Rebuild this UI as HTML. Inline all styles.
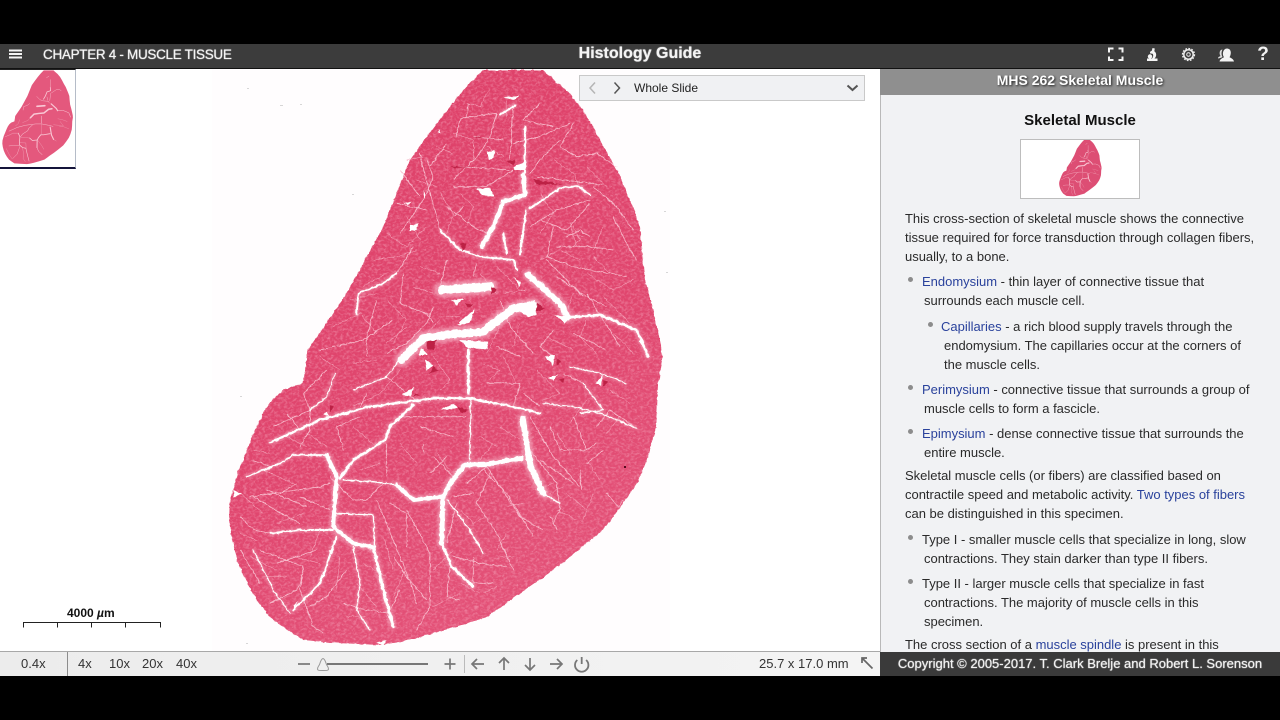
<!DOCTYPE html>
<html><head><meta charset="utf-8"><title>Histology Guide</title>
<style>
html,body{margin:0;padding:0;background:#000;width:1280px;height:720px;overflow:hidden;font-family:"Liberation Sans",sans-serif}
#s{position:absolute;left:0;top:0;width:1280px;height:720px;background:#000;overflow:hidden}
.a{position:absolute;white-space:nowrap}
#top{left:0;top:44px;width:1280px;height:24px;background:#3c3c3c}
#topl{left:0;top:68px;width:1280px;height:1px;background:#111}
#main{left:0;top:69px;width:880px;height:583px;background:#fff;overflow:hidden}
#panel{left:880px;top:69px;width:400px;height:583px;background:#f1f2f4;overflow:hidden;border-left:1px solid #b9b9b9;box-sizing:border-box}
#phead{left:880px;top:69px;width:400px;height:26px;background:#8f8f8f;color:#fff;font-weight:bold;font-size:14px;line-height:23px;text-align:center;text-shadow:1px 1px 2px #222}
.t{position:absolute;white-space:nowrap;font-size:13px;line-height:19px;color:#2a2a2a;height:19px;letter-spacing:-.01px}
.t a{color:#2a429c;text-decoration:none}
.b{position:absolute;width:5px;height:5px;border-radius:3px;background:#8c8c8c}
#foot{left:0;top:651px;width:880px;height:25px;background:linear-gradient(90deg,#ececec 0,#f0f0f0 50%,#f4f4f4 100%);border-top:1px solid #a8a8a8;box-sizing:border-box}
.f{position:absolute;top:656px;font-size:13px;line-height:16px;color:#333;white-space:nowrap}
#copy{left:880px;top:652px;width:400px;height:24px;background:#3a3a3a;color:#f2f2f2;font-size:13px;line-height:23px;text-align:center;text-shadow:0 0 1px #fff}
#dd{left:579px;top:75px;width:286px;height:26px;box-sizing:border-box;background:#f0f1f3;border:1px solid #c9c9c9}
</style></head><body>
<div id="s">
<svg width="0" height="0" style="position:absolute">
<defs>
<filter id="rough" x="-5%" y="-5%" width="110%" height="110%" color-interpolation-filters="sRGB"><feTurbulence type="fractalNoise" baseFrequency="0.22" numOctaves="2" seed="4"/><feDisplacementMap in="SourceGraphic" scale="3" xChannelSelector="R" yChannelSelector="G"/></filter>
<filter id="tex" x="0" y="0" width="100%" height="100%" color-interpolation-filters="sRGB"><feTurbulence type="fractalNoise" baseFrequency="0.32 0.45" numOctaves="2" seed="9"/><feColorMatrix values="0 0 0 0 1  0 0 0 0 .8  0 0 0 0 .86  .9 0 0 0 -.38"/></filter>
<filter id="bl" x="-5%" y="-5%" width="110%" height="110%"><feGaussianBlur stdDeviation="1.500"/></filter>
<linearGradient id="fl" x1="0.3" y1="0" x2="0.7" y2="1"><stop offset="0" stop-color="#de4169"/><stop offset=".55" stop-color="#e0466e"/><stop offset="1" stop-color="#e4547a"/></linearGradient>
<path id="outline" d="M483 70L543 70L552 78L568 92L583 110L596 132L607 153L618 172L627 193L634 210L640 227L642 252L645 280L652 305L657 327L661 345L662 360L658 383L657 410L655 433L647 460L637 483L620 508L603 530L588 542L570 557L545 576L520 593L505 604L487 617L455 627L420 637L400 642L380 645L337 643L303 640L285 628L270 617L257 600L247 583L238 562L232 540L229 520L230 500L238 472L247 450L255 430L263 413L272 400L283 390L303 383L306 365L308 350L317 337L332 315L347 293L365 260L383 227L396 195L410 160L428 135L447 110L465 88Z"/>
<clipPath id="cp"><use href="#outline"/></clipPath>
<g id="major" fill="none" stroke-linecap="round" stroke-linejoin="round">
 <g transform="translate(220 60) scale(.3333)">
 <path style="stroke-width:calc(24*var(--k,1))" d="M545 900L610 835L700 822L790 815L880 745L940 735"/>
 <path style="stroke-width:calc(18*var(--k,1))" d="M925 645L1020 730L1045 772"/>
 <path style="stroke-width:calc(8*var(--k,1))" d="M1045 772L1140 765L1250 810L1285 890"/>
 <path style="stroke-width:calc(26*var(--k,1))" d="M665 690L810 680"/>
 <path style="stroke-width:calc(13*var(--k,1))" d="M910 345L915 405L850 425L820 500L785 560"/>
 <path style="stroke-width:calc(6*var(--k,1))" d="M915 200L915 340M930 445L1020 385L1075 378L1110 405M660 510L720 570L780 590L880 600L890 630M850 520L860 580M918 450L900 585M530 640L490 670L415 700L410 760M840 165L885 135"/>
 </g>
 <g transform="translate(220 350) scale(.3333)">
 <path style="stroke-width:calc(7*var(--k,1))" d="M150 278L300 210L450 170L640 145L750 145L880 170L960 190"/>
 <path style="stroke-width:calc(8*var(--k,1))" d="M745 0L745 130"/>
 <path style="stroke-width:calc(4*var(--k,1))" d="M752 150L750 330"/>
 <path style="stroke-width:calc(18*var(--k,1))" d="M908 205L922 290L932 350L970 430"/>
 <path style="stroke-width:calc(4*var(--k,1))" d="M970 430L1020 460"/>
 <path style="stroke-width:calc(14*var(--k,1))" d="M905 325L800 342L735 345L690 400L668 445"/>
 <path style="stroke-width:calc(12*var(--k,1))" d="M665 440L580 450L530 405"/>
 <path style="stroke-width:calc(4*var(--k,1))" d="M530 405L460 395L370 390"/>
 <path style="stroke-width:calc(15*var(--k,1))" d="M668 455L665 580"/>
 <path style="stroke-width:calc(8*var(--k,1))" d="M665 580L695 650L760 710"/>
 <path style="stroke-width:calc(4*var(--k,1))" d="M682 450L750 540L790 610"/>
 <path style="stroke-width:calc(8*var(--k,1))" d="M580 165L510 230L495 270L400 330L360 385"/>
 <path style="stroke-width:calc(5*var(--k,1))" d="M80 380L180 340L220 315L320 315"/>
 <path style="stroke-width:calc(12*var(--k,1))" d="M320 315L350 380L340 520"/>
 <path style="stroke-width:calc(12*var(--k,1))" d="M340 530L400 580L460 592"/>
 <path style="stroke-width:calc(9*var(--k,1))" d="M460 592L490 720L520 830"/>
 <path style="stroke-width:calc(6*var(--k,1))" d="M150 550L240 540L340 540"/>
 <path style="stroke-width:calc(4*var(--k,1))" d="M350 490L460 495L465 590"/>
 <path style="stroke-width:calc(6*var(--k,1))" d="M350 560L300 700L220 780"/>
 <path style="stroke-width:calc(4*var(--k,1))" d="M400 590L420 700L410 780L450 840"/>
 <path style="stroke-width:calc(3.500*var(--k,1))" d="M100 600L160 720L210 790M970 160L1060 170L1140 190L1250 235M1090 100L1150 180L1080 190M1050 50L1140 70L1220 100M560 0L500 80L400 120M345 70L320 140L270 180"/>
 </g>
</g>
<g id="minor" fill="none" stroke="#f8bccd" stroke-width="2.500" stroke-linejoin="round">
 <g transform="translate(220 60) scale(.3333)">
 <path d="M710 230L720 175L830 160M745 130L740 170M830 160L810 230L780 280L700 360M880 140L870 300M620 300L640 350L610 420L540 520M600 280L610 330L640 430L660 510M680 250L630 320M540 330L600 410M530 430L620 450M960 130L910 180L1000 200M1060 190L1020 260L1070 290L1130 280L1190 320M1020 240L960 300L930 340M1120 380L1190 440L1240 510M1180 470L1220 550L1250 600M960 480L1040 510L1110 430M1000 500L980 590L1060 620L1220 650M1010 650L1100 710L1160 740M980 600L1090 710M880 330L800 380L700 380M680 440L760 500L800 520M680 600L660 680M770 610L760 650M550 640L540 730L560 740L620 760L640 790M580 560L530 640M470 720L440 830L440 890M300 870L430 840L520 780M1000 810L960 860L1000 890M1060 820L1160 870M840 720L870 800L940 880M700 470L730 440M930 500L1010 450L1110 420M1010 560L1110 560L1180 570M760 230L850 240M720 320L870 330M950 350L1150 375M640 740L620 790L560 850L500 880M830 860L900 890M1100 700L1150 780L1200 860M880 250L960 230L1050 190M1040 530L1080 510L1110 530"/>
 </g>
 <g transform="translate(220 350) scale(.3333)">
 <path d="M160 230L270 180L250 130L320 60M200 190L240 240M270 170L270 240L240 290M100 330L150 350M90 440L300 410L330 400M100 440L200 500L240 520M60 500L100 540L150 550M140 420L260 470M240 440L330 480M120 600L250 650L240 720M170 640L290 600M60 600L120 700M330 380L400 450L440 450L490 400M370 300L350 230L420 200M540 200L620 200L740 200M600 230L700 260M500 280L500 380M610 280L610 310M470 450L520 570L580 720L590 760M510 460L560 490L560 590M560 480L630 610L630 770L590 840M630 370L680 320M700 380L640 320M740 400L800 350L900 500L970 540M790 360L860 430L940 560M810 370L770 460L830 550L880 660M760 430L700 440M710 460L680 580M700 620L780 640L860 650M760 620L760 700L820 700M690 650L680 740L720 750M520 620L560 680L620 750M370 760L400 770L440 780L510 790M240 720L280 830L310 850M270 770L320 740L380 660M930 200L1000 320L1080 410M990 230L1020 300L1100 300M1060 200L1100 300L1130 280M960 330L1060 400M930 300L1010 400L1020 480L1000 520M1080 360L1085 420M1160 430L1195 470L1210 450M1250 235L1170 180L1130 230M800 100L900 100L880 170M910 130L960 170M1090 100L1030 70M990 500L1010 540M500 80L560 130L600 160M440 130L420 170M230 400L180 430M150 760L230 720L250 680M540 720L500 800M1150 300L1100 340"/>
 </g>
</g>
<g id="fine" fill="none" stroke="#f5a6bc" stroke-width="1.600">
 <g transform="translate(220 60) scale(.3333)">
 <path d="M740 130L780 140L800 100M860 120L860 170M700 220L760 240L760 300M800 260L850 290M650 260L700 280M560 300L610 290M590 360L650 380M660 400L700 460L680 520M720 400L760 440L740 500M560 470L600 540M500 520L560 560L620 500M460 600L530 590L590 570M430 680L500 640M390 720L470 700M340 800L420 760L470 820M500 720L560 780L520 850M600 620L660 640M580 680L640 700M830 620L900 690M780 640L830 700M960 400L1000 460L960 520M1000 300L1060 340L1090 400M1100 320L1160 380M960 600L1020 570L1080 600M1120 590L1170 640M1100 640L1180 690L1240 660M1150 500L1120 570M1060 500L1080 540L1060 560M1030 520L1090 530M1050 490L1070 560M850 700L920 690M1060 700L1040 760M1150 710L1230 790M1180 820L1240 880M980 830L1060 870M1100 780L1080 830L1130 880M900 790L880 860M840 800L800 880M660 770L720 770M560 800L500 850M620 820L660 780"/>
 </g>
 <g transform="translate(220 350) scale(.3333)">
 <path d="M300 20L360 60M400 40L470 30M400 170L480 130L540 60M640 20L690 90L660 120M780 40L840 60L810 90M850 20L890 100M950 60L1020 130L970 150M1100 150L1050 220M1170 120L1230 160M1200 200L1160 250M1010 250L1050 310M1100 330L1140 390M1040 430L1100 480M1120 430L1090 510M1010 480L1070 510M840 230L900 270M780 260L830 290M820 280L780 330M650 310L690 360M540 280L590 340M420 360L480 340M400 230L470 290M260 250L320 290M200 260L260 290M100 300L150 310M130 360L220 400M60 430L130 490M170 520L250 490M60 550L110 570M90 620L170 660M130 680L200 680M220 620L300 640M300 540L270 620M360 620L350 720M430 640L500 680M410 700L470 770M380 800L440 800M520 660L490 560M560 650L520 740M640 660L700 600M720 480L760 520M760 520L800 500M860 550L830 600M840 620L880 620M720 700L780 730M640 770L720 730M790 730L830 710M860 470L910 460M940 420L1000 400M990 430L1030 410"/>
 </g>
</g>
<g id="holes" fill="#fff">
 <g transform="translate(220 60) scale(.3333)">
 <path d="M800 275L825 270L822 295L805 300ZM770 385L810 385L822 410L785 405ZM570 495L595 490L590 510L570 512ZM880 320L920 305L915 330L885 330ZM880 735L945 720L950 765L925 770L900 755ZM695 720L735 715L710 735ZM710 795L765 745L750 790ZM720 840L805 845L800 868L745 865ZM880 650L905 670L900 682ZM605 865L625 885L595 885ZM850 112L900 108L880 120ZM1005 765L1055 770L1035 790ZM550 430L575 425L565 435ZM655 205L662 220L655 218ZM610 390L617 415L610 410Z"/>
 </g>
 <g transform="translate(220 350) scale(.3333)">
 <path d="M615 30L640 45L620 62ZM545 135L580 110L575 138ZM660 180L710 175L700 160ZM320 185L330 200L310 195ZM975 20L1005 15L1000 45ZM985 85L1015 70L1000 92ZM1125 100L1150 75L1142 106ZM40 420L65 430L40 445ZM220 770L235 750L222 782ZM470 880L500 870L490 885Z"/>
 </g>
</g>
<g id="dark" fill="#bd2145">
 <g transform="translate(220 60) scale(.3333)">
 <path d="M860 305L885 300L880 315ZM950 730L975 745L950 755ZM620 845L650 840L640 870L620 865ZM720 550L740 550L730 575ZM815 680L830 690L815 705ZM735 730L760 735L745 745ZM940 358L1030 372L950 374ZM760 232L790 232L775 236ZM690 320L760 320L700 324Z"/>
 </g>
 <g transform="translate(220 350) scale(.3333)">
 <path d="M640 50L655 60L630 72ZM585 130L600 135L580 140ZM710 170L745 180L725 190ZM1010 25L1025 35L1010 45ZM1015 90L1035 85L1030 100ZM1150 90L1165 95L1150 110ZM330 165L345 170L330 185Z"/>
 </g>
</g>
</defs></svg>

<div class="a" id="top"></div><div class="a" id="topl"></div>
<svg class="a" style="left:9px;top:49px" width="14" height="10"><path d="M0 1.500H13M0 5H13M0 8.500H13" stroke="#f5f5f5" stroke-width="2"/></svg>
<div class="a" style="left:43px;top:46px;font-size:13.500px;line-height:17px;color:#f4f4f4;letter-spacing:-.31px;text-shadow:0 0 1px #fff">CHAPTER 4 - MUSCLE TISSUE</div>
<div class="a" style="left:540px;width:200px;text-align:center;top:44px;font-size:16px;line-height:19px;font-weight:bold;color:#f4f4f4;text-shadow:0 0 1px #fff">Histology Guide</div>
<svg class="a" style="left:1100px;top:44px" width="180" height="24" fill="none">
 <path d="M9 8.500V4.500H13.500M18.500 4.500H22.500V8.500M22.500 12.500V16H18.500M13.500 16H9V12.500" stroke="#f4f4f4" stroke-width="2"/>
 <path d="M47 17H57.500V14.500H54.500C57 12.500 56.500 8.500 54.300 7.300L54.800 4.500L52.500 4L51.800 6.800C50.500 7 49.800 8.200 50 9.400L52.500 9.800C53.500 10.500 53.500 13 52 14.500H47Z" fill="#f4f4f4"/><circle cx="50" cy="12.500" r="2.200" fill="#f4f4f4"/>
 <circle cx="88.500" cy="10.500" r="4.700" stroke="#eee" stroke-width="1.500"/><circle cx="88.500" cy="10.500" r="6" stroke="#eee" stroke-width="1.300" stroke-dasharray="1.800 1.300"/><circle cx="88.500" cy="10.500" r="1.800" stroke="#ddd" stroke-width="1.100"/>
 <path d="M119.500 17.500C120 15 122.500 14 124 13.200C123 11.800 122.700 10.200 123 8.500C123.500 6 125 4.500 127 4.500C129.300 4.500 130.800 6.300 130.800 8.500C130.800 10.300 130.300 12 129.500 13.200C131 14 133.500 15 134 17.500Z" fill="#f4f4f4"/><path d="M118 14.500C118 12.500 120 12.500 120.500 12C119 10 119.300 5.500 122.500 5.500C121.500 7.500 121 10.500 122.500 13C121 14 119.500 14 118 14.500Z" fill="#ddd"/>
</svg>
<div class="a" style="left:1256px;top:44px;width:14px;text-align:center;font-size:19px;line-height:22px;font-weight:bold;color:#f2f2f2">?</div>

<div class="a" id="main">
 <svg width="880" height="583" viewBox="0 69 880 583" style="position:absolute;left:0;top:0">
  <rect x="212" y="69" width="458" height="583" fill="#fffdfe"/>
  <g fill="#bdbdbd" opacity=".6">
   <rect x="247" y="88" width="2" height="1"/><rect x="280" y="105" width="3" height="1"/><rect x="300" y="104" width="2" height="1"/><rect x="352" y="194" width="2" height="1"/><rect x="240" y="396" width="2" height="1"/><rect x="664" y="211" width="2" height="1"/><rect x="666" y="272" width="2" height="1"/><rect x="246" y="643" width="2" height="1"/>
  </g>
  <g filter="url(#rough)">
   <use href="#outline" fill="url(#fl)"/>
   <g clip-path="url(#cp)"><rect x="212" y="69" width="460" height="583" filter="url(#tex)"/></g>
   <use href="#fine"/>
   <use href="#minor"/>
   <g clip-path="url(#cp)"><use href="#major" stroke="#f7b6c8" opacity=".65" filter="url(#bl)" style="--k:1.800"/></g>
   <use href="#major" stroke="#fff"/>
   <use href="#holes"/>
   <use href="#dark"/>
  </g>
  <rect x="624" y="466" width="2" height="2" fill="#5a0a20"/>
 </svg>
 <div class="a" style="left:0;top:0;width:76px;height:100px;box-sizing:border-box;background:#fff;border-right:1px solid #b5bcc8;border-bottom:2px solid #14143a;border-top:1px solid #222;overflow:hidden">
  <svg width="75" height="97" style="position:absolute;left:0;top:0"><g transform="translate(-35 -11) scale(.163)" style="--k:1.150"><use href="#outline" fill="#e4587d"/><use href="#major" stroke="#f9c9d6"/></g></svg>
 </div>
 <div class="a" style="top:536px;font-size:12px;line-height:16px;font-weight:bold;color:#111;left:67px">4000 <i>µ</i>m</div>
 <svg class="a" style="left:20px;top:550px" width="145" height="12"><path d="M3.500 8.500V3.500H140.500V8.500M37.500 3.500V8.500M71.500 3.500V8.500M105.500 3.500V8.500" fill="none" stroke="#222" stroke-width="1"/></svg>
</div>

<div class="a" id="dd"></div>
<svg class="a" style="left:585px;top:80px" width="40" height="16" fill="none" stroke-width="1.500"><path d="M10 2.500L5 8L10 13.500" stroke="#b5b5b5"/><path d="M29.500 2.500L34.500 8L29.500 13.500" stroke="#555"/></svg>
<div class="a" style="left:634px;top:80px;font-size:12px;line-height:16px;color:#222">Whole Slide</div>
<svg class="a" style="left:845px;top:82px" width="15" height="12" fill="none"><path d="M2.500 3.500L7.500 8L12.500 3.500" stroke="#555" stroke-width="2"/></svg>

<div class="a" id="panel"></div>
<div class="a" id="phead">MHS 262 Skeletal Muscle</div>
<div class="a" style="left:880px;width:400px;text-align:center;top:112px;font-size:15px;line-height:18px;font-weight:bold;color:#111">Skeletal Muscle</div>
<div class="a" style="left:1020px;top:139px;width:120px;height:60px;box-sizing:border-box;background:#fff;border:1px solid #bdbdbd"></div>
<svg class="a" style="left:1020px;top:139px" width="120" height="60"><g transform="translate(16.700 -5.900) scale(.098)" style="--k:1.500"><use href="#outline" fill="#dd4e74"/><use href="#major" stroke="#f8c3d1"/></g></svg>

<div class="t" style="left:905px;top:209px">This cross-section of skeletal muscle shows the connective</div>
<div class="t" style="left:905px;top:228px">tissue required for force transduction through collagen fibers,</div>
<div class="t" style="left:905px;top:247px">usually, to a bone.</div>
<div class="b" style="left:908px;top:277px"></div>
<div class="t" style="left:922px;top:272px"><a>Endomysium</a> - thin layer of connective tissue that</div>
<div class="t" style="left:924px;top:291px">surrounds each muscle cell.</div>
<div class="b" style="left:928px;top:322px"></div>
<div class="t" style="left:941px;top:317px"><a>Capillaries</a> - a rich blood supply travels through the</div>
<div class="t" style="left:944px;top:336px">endomysium. The capillaries occur at the corners of</div>
<div class="t" style="left:944px;top:355px">the muscle cells.</div>
<div class="b" style="left:908px;top:385px"></div>
<div class="t" style="left:922px;top:380px"><a>Perimysium</a> - connective tissue that surrounds a group of</div>
<div class="t" style="left:924px;top:399px">muscle cells to form a fascicle.</div>
<div class="b" style="left:908px;top:429px"></div>
<div class="t" style="left:922px;top:424px"><a>Epimysium</a> - dense connective tissue that surrounds the</div>
<div class="t" style="left:924px;top:443px">entire muscle.</div>
<div class="t" style="left:905px;top:466px">Skeletal muscle cells (or fibers) are classified based on</div>
<div class="t" style="left:905px;top:485px">contractile speed and metabolic activity. <a>Two types of fibers</a></div>
<div class="t" style="left:905px;top:504px">can be distinguished in this specimen.</div>
<div class="b" style="left:908px;top:535px"></div>
<div class="t" style="left:922px;top:530px">Type I - smaller muscle cells that specialize in long, slow</div>
<div class="t" style="left:924px;top:549px">contractions. They stain darker than type II fibers.</div>
<div class="b" style="left:908px;top:579px"></div>
<div class="t" style="left:922px;top:574px">Type II - larger muscle cells that specialize in fast</div>
<div class="t" style="left:924px;top:593px">contractions. The majority of muscle cells in this</div>
<div class="t" style="left:924px;top:612px">specimen.</div>
<div class="t" style="left:905px;top:635px">The cross section of a <a>muscle spindle</a> is present in this</div>

<div class="a" id="foot"></div>
<div class="a" style="left:67px;top:652px;width:1px;height:24px;background:#8c8c8c"></div>
<div class="f" style="left:21px">0.4x</div>
<div class="f" style="left:78px">4x</div>
<div class="f" style="left:109px">10x</div>
<div class="f" style="left:142px">20x</div>
<div class="f" style="left:176px">40x</div>
<svg class="a" style="left:290px;top:652px" width="310" height="24" fill="none" stroke="#777">
 <path d="M8 12H20" stroke-width="1.700"/>
 <path d="M37 12H138" stroke-width="2"/>
 <path d="M33 6.500C35 7 35.500 10 36.500 12.500C37.500 14.500 38.500 15 38.500 17C38.500 18.500 37 18.500 33 18.500C29 18.500 27.500 18.500 27.500 17C27.500 15 28.500 14.500 29.500 12.500C30.500 10 31 7 33 6.500Z" fill="#f0f0f0" stroke="#999" stroke-width="1"/>
 <path d="M154.500 12H165.500M160 6.500V17.500" stroke-width="1.700"/>
 <path d="M174.500 3V21" stroke="#bbb" stroke-width="1"/>
 <path d="M182 12H194M187 7L182 12L187 17M214 18V6M209 11L214 6L219 11M240 6V18M235 13L240 18L245 13M260 12H272M267 7L272 12L267 17" stroke-width="1.700"/>
 <path d="M291.700 5V12M287.300 8A6.700 6.700 0 1 0 296.100 8" stroke-width="1.800"/>
</svg>
<div class="f" style="left:759px">25.7 x 17.0 mm</div>
<svg class="a" style="left:860px;top:656px" width="14" height="14" fill="none" stroke="#666" stroke-width="1.700"><path d="M2 7V2H7M2 2L12.500 12.500"/></svg>
<div class="a" id="copy">Copyright © 2005-2017. T. Clark Brelje and Robert L. Sorenson</div>
</div>
</body></html>
